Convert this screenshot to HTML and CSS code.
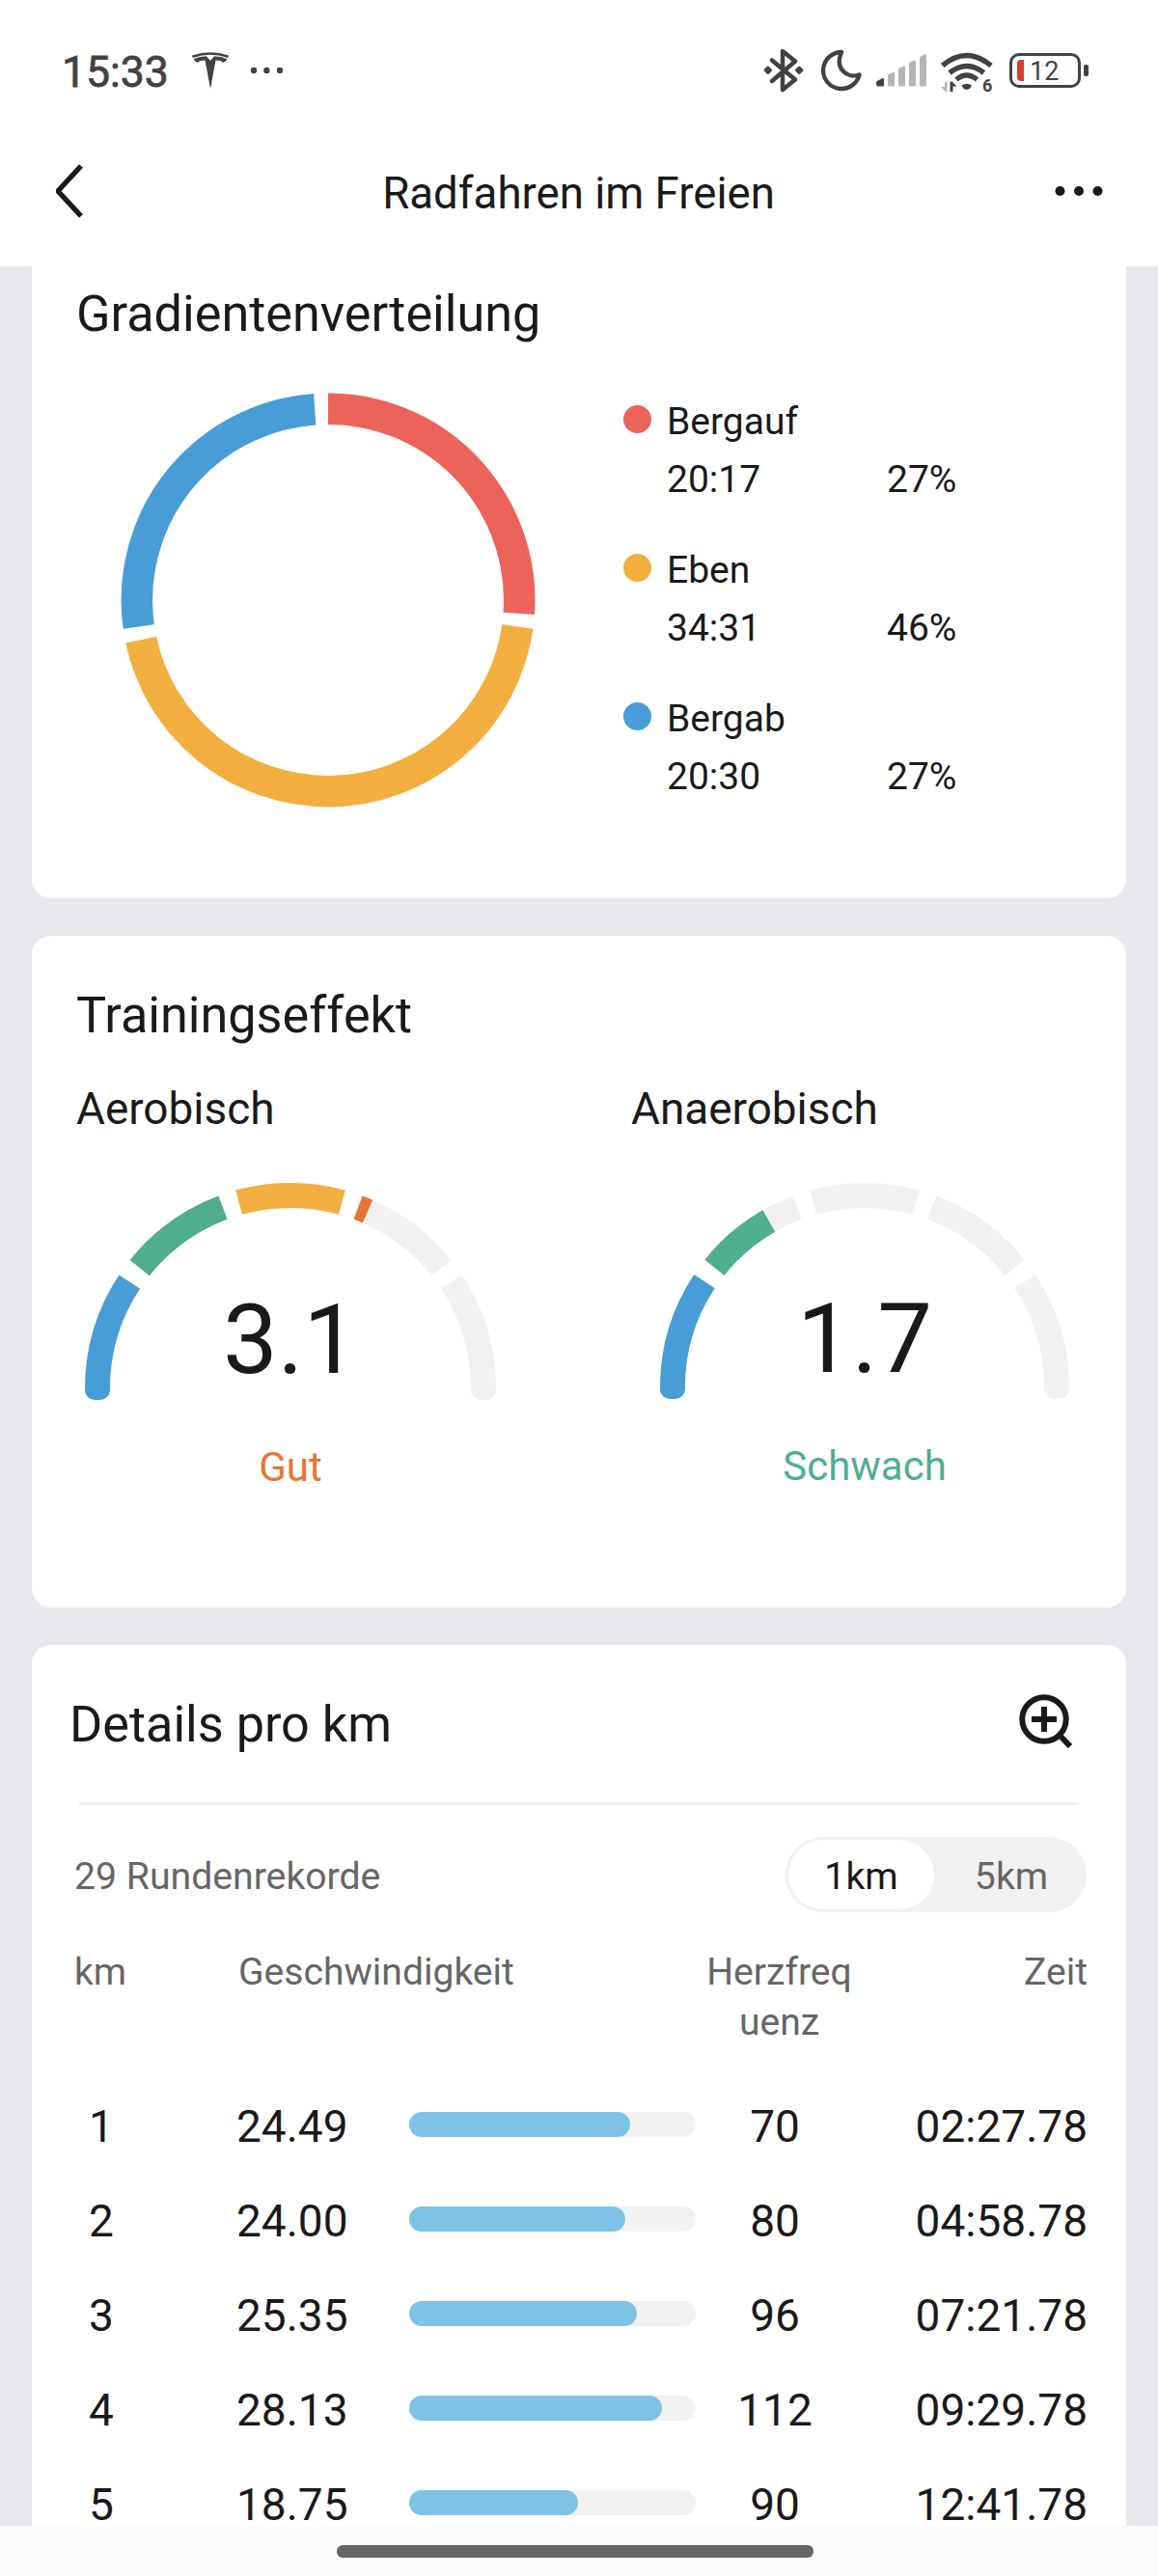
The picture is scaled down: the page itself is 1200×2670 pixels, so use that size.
FILE: index.html
```
<!DOCTYPE html>
<html lang="de">
<head>
    <meta charset="UTF-8">
    <meta name="viewport" content="width=device-width, initial-scale=1.0">
    <title>Radfahren im Freien</title>
    <link rel="stylesheet" href="styles.css">
</head>
<body>
    <div class="status-bar">
        <span class="clock">15:33</span>
        <svg class="icon-tesla" width="38" height="38" viewBox="0 0 38 38" fill="#424242">
            <path d="M0 3.5 Q19 -3 38 3.5 L37.2 6 Q19 -0.5 0.8 6 Z"/>
            <path d="M1.5 7.2 Q8 4.2 15 4.2 L19 9 L23 4.2 Q30 4.2 36.5 7.2 Q35 10 31.5 11 Q31 8.6 24.5 8.6 L19 38 L13.5 8.6 Q7 8.6 6.5 11 Q3 10 1.5 7.2 Z"/>
        </svg>
        <svg class="icon-dots" width="34" height="8" viewBox="0 0 34 8" fill="#424242">
            <circle cx="4" cy="4" r="3.2"/>
            <circle cx="17.3" cy="4" r="3.2"/>
            <circle cx="31" cy="4" r="3.2"/>
        </svg>

        <div class="status-icons">
            <svg class="icon-bluetooth" width="42" height="46" viewBox="0 0 42 46">
                <path d="M9 12.5 L33 32.5 L20 43 V3 L33 13.5 L9 34" fill="none" stroke="#424242" stroke-width="4.5" stroke-linecap="round" stroke-linejoin="round"/>
                <g fill="#424242">
                    <rect x="1.4" y="19.4" width="6.8" height="6.8" rx="1.5" transform="rotate(45 4.8 22.8)"/>
                    <rect x="33.8" y="19.4" width="6.8" height="6.8" rx="1.5" transform="rotate(45 37.2 22.8)"/>
                </g>
            </svg>
            <svg class="icon-moon" width="42" height="44" viewBox="0 0 42 44">
                <path d="M21 3 A19 19 0 1 0 39.5 26.5 C27 31 13.5 20 21 3 Z" fill="none" stroke="#424242" stroke-width="4.4" stroke-linejoin="round"/>
            </svg>
            <svg class="icon-signal" width="52" height="34" viewBox="0 0 52 34" fill="#b5b5b5">
                <path fill="#424242" d="M0 31 V29.5 Q0 28.5 1 28 L6.5 25 Q8 24.5 8 26 V32 Q8 33.5 6.5 33.5 H2 Q0 33.5 0 31 Z"/>
                <path d="M12 22.5 Q12 21.5 13 21 L17.5 19 Q19 18.5 19 20 V32 Q19 33.5 17.5 33.5 H13.5 Q12 33.5 12 32 Z"/>
                <path d="M23 16 Q23 15 24 14.5 L28.5 12.5 Q30 12 30 13.5 V32 Q30 33.5 28.5 33.5 H24.5 Q23 33.5 23 32 Z"/>
                <path d="M34 10 Q34 9 35 8.5 L39.5 6.5 Q41 6 41 7.5 V32 Q41 33.5 39.5 33.5 H35.5 Q34 33.5 34 32 Z"/>
                <path d="M45 4 Q45 3 46 2.5 L50.5 0.3 Q52 0 52 1.5 V32 Q52 33.5 50.5 33.5 H46.5 Q45 33.5 45 32 Z"/>
            </svg>
            <svg class="icon-wifi" width="56" height="46" viewBox="0 0 56 46">
                <g fill="none" stroke="#424242" stroke-width="5.5">
                    <path d="M1.7 14 Q26.7 -7 52 14"/>
                    <path d="M9 21.5 Q26.7 7.5 44.5 21.5"/>
                    <path d="M16 28.5 Q26.7 19.5 37.5 28.5"/>
                </g>
                <path d="M21.5 34.5 Q26.7 31 32 34.5 Q30.5 38.5 26.7 39 Q23 38.5 21.5 34.5 Z" fill="#424242"/>
                <path d="M4 31 H6.5 V41 H4.5 L0.3 36 H4 Z" fill="#b5b5b5"/>
                <path d="M9.5 30.5 H11.5 L16.5 35.5 H12.5 V41 H9.5 Z" fill="#424242"/>
                <text x="43" y="41" font-family="Roboto, sans-serif" font-weight="700" font-size="18" fill="#424242">6</text>
            </svg>
            <div class="battery">
                <div class="battery-body">
                    <div class="battery-level"></div>
                    <span>12</span>
                </div>
                <div class="battery-tip"></div>
            </div>
        </div>
    </div>

    <div class="header">
        <svg class="back" width="30" height="58" viewBox="0 0 30 58">
            <path d="M28 3 L4 29 L28 55" fill="none" stroke="#1a1a1a" stroke-width="5.4" stroke-linejoin="bevel"/>
        </svg>
        <h1>Radfahren im Freien</h1>
        <svg class="more" width="50" height="12" viewBox="0 0 50 12" fill="#1a1a1a">
            <circle cx="5.5" cy="6" r="5"/>
            <circle cx="25" cy="6" r="5"/>
            <circle cx="44.5" cy="6" r="5"/>
        </svg>
    </div>

    <div class="content">
        <div class="card gradient-card">
            <h2>Gradientenverteilung</h2>
            <div class="gradient-body">
                <svg class="donut" width="430" height="430" viewBox="0 0 430 430" fill="none" stroke-width="32.5">
                    <g transform="rotate(-90 215 215)">
                        <circle cx="215" cy="215" r="198.2" pathLength="360" stroke="#ec6459" stroke-dasharray="94 266"/>
                        <circle cx="215" cy="215" r="198.2" pathLength="360" stroke="#f2af40" stroke-dasharray="160 200" stroke-dashoffset="-98"/>
                        <circle cx="215" cy="215" r="198.2" pathLength="360" stroke="#489dd7" stroke-dasharray="94 266" stroke-dashoffset="-262"/>
                    </g>
                </svg>
                <div class="legend">
                    <div class="legend-item">
                        <i class="dot red"></i><span class="name">Bergauf</span>
                        <span class="time">20:17</span><span class="percent">27%</span>
                    </div>
                    <div class="legend-item">
                        <i class="dot yellow"></i><span class="name">Eben</span>
                        <span class="time">34:31</span><span class="percent">46%</span>
                    </div>
                    <div class="legend-item">
                        <i class="dot blue"></i><span class="name">Bergab</span>
                        <span class="time">20:30</span><span class="percent">27%</span>
                    </div>
                </div>
            </div>
        </div>

        <div class="card effect-card">
            <h2>Trainingseffekt</h2>
            <div class="effects">
                <div class="effect">
                    <h3>Aerobisch</h3>
                    <div class="gauge">
                        <svg width="426" height="225" viewBox="0 0 426 225" fill="none" stroke-width="26">
                            <path d="M13 213 A200 200 0 0 1 413 213" pathLength="180" stroke="#489dd7" stroke-dasharray="33.5 180"/>
                            <path d="M13 213 A200 200 0 0 1 413 213" pathLength="180" stroke="#4fae90" stroke-dasharray="0 38.6 30.9 180"/>
                            <path d="M13 213 A200 200 0 0 1 413 213" pathLength="180" stroke="#f2af40" stroke-dasharray="0 74.5 31 180"/>
                            <path d="M13 213 A200 200 0 0 1 413 213" pathLength="180" stroke="#f1f1f1" stroke-dasharray="0 111 30.4 5.1 40 180"/>
                            <path d="M13 213 A200 200 0 0 1 413 213" pathLength="180" stroke="#e67534" stroke-dasharray="0 110.5 3.1 180"/>
                            <path d="M0 212 V215 A10 10 0 0 0 10 225 H16 A10 10 0 0 0 26 215 V212 Z" fill="#489dd7"/>
                            <path d="M400 212 V215 A10 10 0 0 0 410 225 H416 A10 10 0 0 0 426 215 V212 Z" fill="#f1f1f1"/>
                        </svg>
                        <div class="value">3.1</div>
                    </div>
                    <div class="rating good">Gut</div>
                </div>
                <div class="effect">
                    <h3>Anaerobisch</h3>
                    <div class="gauge gauge-right">
                        <svg width="424" height="224" viewBox="0 0 426 225" fill="none" stroke-width="26">
                            <path d="M13 213 A200 200 0 0 1 413 213" pathLength="180" stroke="#489dd7" stroke-dasharray="33.5 180"/>
                            <path d="M13 213 A200 200 0 0 1 413 213" pathLength="180" stroke="#f1f1f1" stroke-dasharray="0 59 10.5 5 31 5 30.9 5.1 40 180"/>
                            <path d="M13 213 A200 200 0 0 1 413 213" pathLength="180" stroke="#4fae90" stroke-dasharray="0 38.6 21.5 180"/>
                            <path d="M0 212 V215 A10 10 0 0 0 10 225 H16 A10 10 0 0 0 26 215 V212 Z" fill="#489dd7"/>
                            <path d="M400 212 V215 A10 10 0 0 0 410 225 H416 A10 10 0 0 0 426 215 V212 Z" fill="#f1f1f1"/>
                        </svg>
                        <div class="value">1.7</div>
                    </div>
                    <div class="rating weak">Schwach</div>
                </div>
            </div>
        </div>

        <div class="card details-card">
            <div class="details-header">
                <h2>Details pro km</h2>
                <svg width="58" height="58" viewBox="0 0 58 58" fill="none" stroke="#1a1a1a" stroke-width="6">
                    <circle cx="28" cy="28" r="22.7"/>
                    <path d="M15 28 H41 M28 15 V41 M43.5 44 L55 56"/>
                </svg>
            </div>
            <div class="divider"></div>
            <div class="laps">
                <span>29 Rundenrekorde</span>
                <div class="toggle">
                    <button class="active">1km</button>
                    <button>5km</button>
                </div>
            </div>
            <div class="row head">
                <span class="km">km</span>
                <span class="label-speed">Geschwindigkeit</span>
                <span class="rate">Herzfreq<br>uenz</span>
                <span class="total">Zeit</span>
            </div>
            <div class="row">
                <span class="km">1</span>
                <span class="speed">24.49</span>
                <div class="bar"><div class="fill" style="width: 77.2%"></div></div>
                <span class="rate">70</span>
                <span class="total">02:27.78</span>
            </div>
            <div class="row">
                <span class="km">2</span>
                <span class="speed">24.00</span>
                <div class="bar"><div class="fill" style="width: 75.4%"></div></div>
                <span class="rate">80</span>
                <span class="total">04:58.78</span>
            </div>
            <div class="row">
                <span class="km">3</span>
                <span class="speed">25.35</span>
                <div class="bar"><div class="fill" style="width: 79.5%"></div></div>
                <span class="rate">96</span>
                <span class="total">07:21.78</span>
            </div>
            <div class="row">
                <span class="km">4</span>
                <span class="speed">28.13</span>
                <div class="bar"><div class="fill" style="width: 88.3%"></div></div>
                <span class="rate">112</span>
                <span class="total">09:29.78</span>
            </div>
            <div class="row">
                <span class="km">5</span>
                <span class="speed">18.75</span>
                <div class="bar"><div class="fill" style="width: 58.9%"></div></div>
                <span class="rate">90</span>
                <span class="total">12:41.78</span>
            </div>
        </div>
    </div>

    <div class="nav-bar">
        <div class="handle"></div>
    </div>
</body>
</html>
```

FILE: styles.css
```
* {
    box-sizing: border-box;
}
body {
    display: flex;
    flex-direction: column;
    width: 1200px;
    height: 2670px;
    margin: 0;
    overflow: hidden;
    font-family: Roboto, sans-serif;
    color: #1a1a1a;
    background: #e7e8ec;
}
h1, h2, h3 {
    margin: 0;
    font-weight: 400;
}

/* Status bar */
.status-bar {
    display: flex;
    align-items: center;
    flex: none;
    height: 146px;
    padding: 0 72px 0 64px;
    background: #fff;
    color: #424242;
}
.clock {
    width: 135px;
    padding-top: 4px;
    font-size: 44.5px;
    -webkit-text-stroke: 0.8px #424242;
}
.icon-dots {
    margin-left: 22px;
}
.status-icons {
    display: flex;
    align-items: center;
    margin-left: auto;
}
.icon-moon {
    margin-left: 18px;
}
.icon-signal {
    margin-left: 15px;
}
.icon-wifi {
    margin: 8px 0 0 15px;
}
.battery {
    display: flex;
    align-items: center;
    gap: 3px;
    margin-left: 15px;
}
.battery-body {
    display: flex;
    align-items: center;
    width: 74px;
    height: 36px;
    padding-left: 5px;
    border: 3.5px solid #424242;
    border-radius: 10px;
    font-size: 27px;
    line-height: 30px;
}
.battery-body span {
    padding-top: 1px;
}
.battery-level {
    width: 7px;
    height: 22px;
    margin-right: 6px;
    border-radius: 4px 0 0 4px;
    background: #d73d32;
}
.battery-tip {
    width: 5px;
    height: 12px;
    border-radius: 2px;
    background: #424242;
}

/* Title bar */
.header {
    display: flex;
    align-items: center;
    justify-content: space-between;
    flex: none;
    height: 130px;
    padding: 0 57px 22px 56px;
    background: #fff;
}
.header h1 {
    margin-left: 20px;
    padding-top: 2px;
    font-size: 45.6px;
    line-height: 60px;
}
.back, .more {
    margin-bottom: 5px;
}

/* Cards */
.content {
    flex: 1;
    min-height: 0;
    padding: 0 33px;
    overflow: hidden;
}
.card {
    background: #fff;
    border-radius: 20px;
}
.card h2 {
    font-size: 52.2px;
    line-height: 60px;
}
.gradient-card {
    height: 655px;
    padding: 20px 0 0 46px;
    border-radius: 0 0 20px 20px;
}
.gradient-body {
    display: flex;
    padding: 51px 0 0 45.5px;
}
.legend {
    display: flex;
    flex-direction: column;
    gap: 34px;
    margin-left: 91.5px;
}
.legend-item {
    display: grid;
    grid-template-columns: 45px 228px auto;
    align-items: center;
    font-size: 39px;
    line-height: 60px;
}
.name {
    grid-column: 2 / 4;
}
.time {
    grid-column: 2;
}
.dot {
    width: 29px;
    height: 29px;
    margin-bottom: 5px;
    border-radius: 50%;
}
.red {
    background: #ec6459;
}
.yellow {
    background: #f2af40;
}
.blue {
    background: #489dd7;
}

/* Training effect */
.effect-card {
    height: 696px;
    margin-top: 39px;
    padding: 53px 46px 0;
}
.effects {
    display: grid;
    grid-template-columns: 575px 1fr;
    padding-top: 36px;
}
.effect h3 {
    font-size: 45.9px;
    line-height: 60px;
}
.gauge {
    width: 426px;
    height: 225px;
    margin: 47px 0 0 9px;
    text-align: center;
}
.gauge-right {
    width: 424px;
    margin-left: 30px;
}
.gauge svg {
    display: block;
}
.value {
    margin-top: -122px;
    font-size: 101px;
    line-height: 120px;
}
.rating {
    width: 426px;
    margin: 40px 0 0 9px;
    font-size: 42px;
    line-height: 60px;
    text-align: center;
}
.gauge-right + .rating {
    width: 424px;
    margin: 39px 0 0 30px;
}
.good {
    color: #e67534;
}
.weak {
    color: #4fae90;
}

/* Lap table */
.details-card {
    height: 1000px;
    margin-top: 39px;
    padding: 48px 41px 0;
}
.details-header {
    display: flex;
    justify-content: space-between;
    padding-right: 14px;
}
.details-header h2 {
    margin: 5px 0 0 -2px;
}
.details-header svg {
    margin-top: 1px;
}
.divider {
    height: 3px;
    margin: 50px 8px 0;
    background: #f1f1f1;
}
.laps {
    display: flex;
    align-items: center;
    justify-content: space-between;
    margin: 33px 0 0 3px;
    color: #666;
    font-size: 39.2px;
}
.laps span {
    padding-top: 3px;
}
.toggle {
    display: flex;
    width: 312px;
    height: 78px;
    padding: 3px;
    border-radius: 39px;
    background: #f1f1f1;
}
.toggle button {
    width: 156px;
    padding: 3px 0 0;
    border: none;
    border-radius: 36px;
    background: none;
    color: #666;
    font: inherit;
}
.toggle .active {
    flex: none;
    width: 151px;
    margin-right: 5px;
    background: #fff;
    color: #1a1a1a;
}
.row {
    display: grid;
    grid-template-columns: 170px 180px 297px 164px 1fr;
    align-items: center;
    height: 98px;
    font-size: 46px;
    line-height: 42px;
}
.row span {
    padding-top: 3px;
}
.row .km {
    padding-left: 18px;
}
.row .speed {
    padding-left: 1px;
}
.row .rate {
    text-align: center;
}
.row .total {
    margin-right: -1px;
    text-align: right;
}
.head {
    align-items: start;
    height: 136px;
    margin-top: 35px;
    color: #666;
    font-size: 39.1px;
    line-height: 52px;
}
.head span {
    padding-top: 1px;
}
.head .km {
    padding-left: 3px;
}
.head .label-speed {
    grid-column: 2 / 4;
    padding-left: 3px;
}
.head .rate {
    padding-left: 9px;
}
.bar {
    height: 26px;
    border-radius: 13px;
    background: #f1f1f1;
}
.fill {
    height: 26px;
    border-radius: 13px;
    background: #7ec3e6;
}

/* Gesture bar */
.nav-bar {
    display: flex;
    justify-content: center;
    flex: none;
    height: 52px;
    padding: 20px 8px 0 0;
    background: #fcfcfc;
}
.handle {
    width: 494px;
    height: 13px;
    border-radius: 6px;
    background: #666;
}
```
